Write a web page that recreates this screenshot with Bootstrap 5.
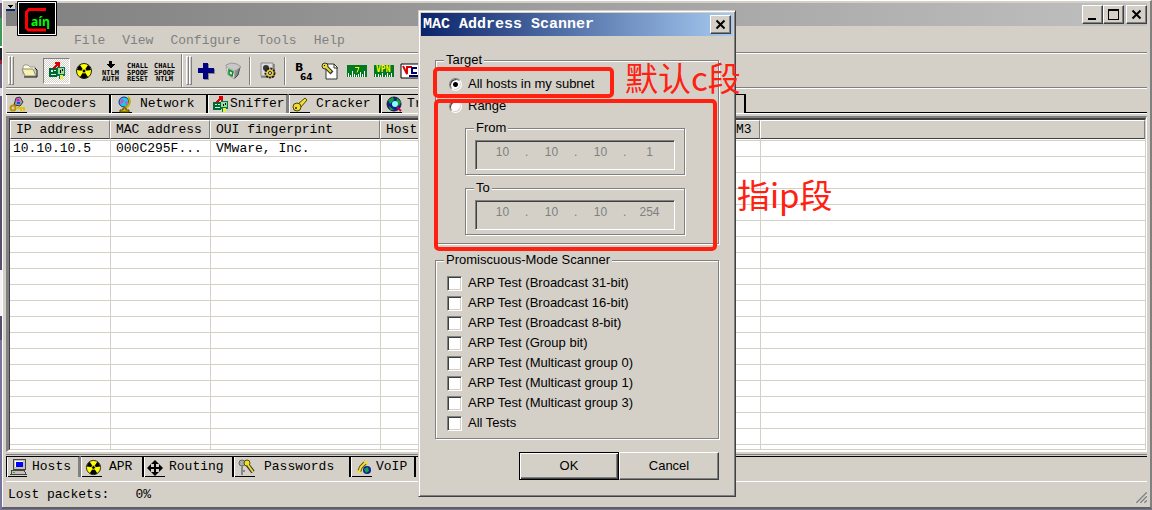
<!DOCTYPE html>
<html lang="en">
<head>
<meta charset="utf-8">
<meta name="viewport" content="width=device-width, initial-scale=1">
<title>Cain</title>
<link href="https://cdn.jsdelivr.net/npm/bootstrap@5.3.0/dist/css/bootstrap.min.css" rel="stylesheet">
<script src="https://cdn.jsdelivr.net/npm/bootstrap@5.3.0/dist/js/bootstrap.bundle.min.js"></script>
<style>
:root{--face:#d4d0c8;--shade:#808080;--deep:#404040;--ink:#ff2010}
body{background:linear-gradient(#d8d4e0 0 3px,#5d5570 3px 18px,#3f9a58 18px 46px,#fff 46px 48px,#20202c 48px 60px,#a02030 60px 64px,#6c6686 64px 88px,#dcd8e4 88px 96px,#5f5a7c 96px 160px,#55506e 160px 270px,#f4f2f4 270px 316px,#50506c 316px 340px,#76749c 340px);
 font-family:"Liberation Mono","Noto Sans CJK SC",monospace;font-size:13px;line-height:16px;color:#000;padding:0 0 1px 2px;overflow:hidden}
svg{display:block;flex:none}
.pix{shape-rendering:crispEdges}
.app-window{background:var(--face);min-height:calc(100vh - 1px);padding:2px 3px 0 4px;border-right:2px solid var(--shade);border-bottom:2px solid #606060;border-top:1px solid #fff;box-shadow:inset 1px 0 0 #fff}
.caption{height:23px;background:linear-gradient(90deg,#808080,#c0c0c0)}
.caption-buttons{padding-top:2px}
.sysbox{width:9px;height:8px;background:var(--face);border-bottom:2px solid #0a246a}
.cain-logo{left:15px;top:0}
.bevel{background:var(--face);border:1px solid;border-color:#fff var(--deep) var(--deep) #fff;box-shadow:inset -1px -1px 0 var(--shade);border-radius:0;padding:0;width:21px;height:19px;display:flex;align-items:center;justify-content:center}
.bevel+.bevel:last-child{margin-left:2px}
.menu-row{height:26px;padding:3px 0 0 68px;gap:17px}
.menu-row a{color:var(--shade);text-decoration:none}
.etched{border-top:1px solid var(--shade);box-shadow:inset 0 1px 0 #fff}
.tools{height:35px;padding:1px 0 0 2px}
.tool{width:27px;height:26px;padding:0;border:0;background:none;display:flex;align-items:center;justify-content:center;flex:none}
.tool.down{border:1px solid;border-color:var(--shade) #fff #fff var(--shade);background:repeating-conic-gradient(#fff 0 25%,var(--face) 0 50%) 0 0/2px 2px}
.grip{width:3px;height:29px;border:1px solid;border-color:#fff var(--shade) var(--shade) #fff;flex:none}
.grip-end{margin-right:2px}
.vline{width:2px;height:28px;background:linear-gradient(90deg,var(--shade) 50%,#fff 50%);margin:0 3px;flex:none}
.tabs-top{height:26px;padding-top:6px}
.tabs-top .strip{height:20px;background:#fff}
.strip-rest{background:linear-gradient(var(--face) 18px,#000 18px 19px,#fff 19px)}
.strip-tab{height:19px;border:0;border-top:1px solid #000;border-right:2px solid #000;border-radius:0;padding:0;background:linear-gradient(#000,#000) 1px 100%/20px 1px no-repeat,var(--face);color:#000;display:flex;align-items:center;flex:none;font-size:13px;line-height:16px;text-align:left;box-shadow:inset 1px 0 0 #fff;white-space:nowrap}
.strip-tab.on{border-right:3px solid var(--shade);background:var(--face)}
.strip-tab span{padding-bottom:1px}
.w-dec{width:105px;gap:8px;padding-left:3px}.w-net{width:97px;gap:7px;padding-left:5px}.w-sni{width:81px;gap:1px;padding-left:4px}
.w-cra{width:92px;gap:8px;padding-left:2px}.w-tra{width:200px;gap:4px;padding-left:5px}.w-que{width:165px}
.list-pane{margin-top:3px;border-top:2px solid var(--shade);border-left:3px solid var(--shade);border-right:1px solid #fff;border-bottom:2px solid #fff;min-height:200px;flex:1 0 auto}
.list-view{border-top:2px solid var(--deep);border-left:1px solid var(--deep);border-bottom:1px solid var(--face);border-right:1px solid var(--face);
 background:linear-gradient(var(--face),var(--face)) 100px 0/1px 100% no-repeat,linear-gradient(var(--face),var(--face)) 200px 0/1px 100% no-repeat,linear-gradient(var(--face),var(--face)) 370px 0/1px 100% no-repeat,linear-gradient(var(--face),var(--face)) 750px 0/1px 100% no-repeat,repeating-linear-gradient(#fff 0 4px,var(--face) 4px 5px,#fff 5px 16px),#fff}
.hosts-grid{width:100%;table-layout:fixed;border-collapse:separate;border-spacing:0}
.hosts-grid th{height:19px;padding:1px 0 0 5px;font-weight:400;background:var(--face);border-top:1px solid #fff;border-left:1px solid #fff;border-right:1px solid var(--shade);border-bottom:1px solid var(--deep);white-space:nowrap;overflow:hidden}
.hosts-grid td{padding:2px 0 0 6px;height:18px;white-space:nowrap;overflow:hidden}
.hosts-grid td:first-child{padding-left:3px}
.tabs-bottom{height:28px;margin-top:2px;border-top:1px solid var(--shade);background:linear-gradient(#000,#000) 0 1px/100% 1px no-repeat;border-bottom:1px solid #fff;padding-top:1px}
.tabs-bottom .strip-tab{height:21px;border-top:1px solid #000}
.tabs-bottom .on{border-left:1px solid #000;border-right:3px solid var(--shade);background:linear-gradient(#000,#000) 0 100%/20px 1px no-repeat,var(--face)}
.b-hosts{width:75px;gap:5px;padding-left:3px}.b-apr{width:63px;gap:7px;padding-left:4px}.b-rou{width:90px;gap:5px;padding-left:3px}.b-pas{width:117px;gap:9px;padding-left:4px}.b-voip{width:65px;gap:3px;padding-left:5px}
.status{height:25px;padding-left:2px;gap:26px}
.dialog-layer{padding:10px 0 0 2px}
.scan-dialog{width:318px;background:var(--face);border:1px solid;border-color:var(--face) var(--deep) var(--deep) var(--face);box-shadow:inset 1px 1px 0 #fff,inset -1px -1px 0 var(--shade);padding:2px;font-family:"Liberation Sans",Arial,sans-serif}
.scan-title{height:23px;background:linear-gradient(90deg,#0a246a,#a6caf0);color:#fff;font:bold 15px/23px "Liberation Mono",monospace;padding:0 2px}
.scan-body{padding:16px 14px 14px 14px}
.group{--side:9px;border:1px solid var(--shade);box-shadow:1px 1px 0 #fff,inset 1px 1px 0 #fff;margin:0}
.group>legend{float:none;width:auto;margin:0 0 0 calc(8px - var(--side));padding:0 2px;font-size:13px;line-height:16px;background:var(--face)}
.g-target{--side:29px;padding:8px 33px 8px 29px}
.g-ip{padding:4px 9px}
.g-ip+.g-ip{margin-top:5px}
.g-modes{--side:11px;padding:5px 11px}
.pick{gap:6px;height:16px}
.pick-range{margin:6px 0}
.g-modes .pick{height:20px}
.form-check-input.w95{margin:0;width:15px;height:15px;border-radius:0;border:1px solid;border-color:var(--shade) #fff #fff var(--shade);box-shadow:inset 1px 1px 0 var(--deep),inset -1px -1px 0 var(--face);background-color:#fff;flex:none}
.form-check-input.w95[type=radio]{width:13px;height:13px;border-radius:50%;background-image:none}
.form-check-input.w95[type=radio]:checked{background:radial-gradient(circle,#000 0 2px,#fff 3px)}
.g-target>.pick{margin-left:-16px}
.ip-box{height:30px;border:1px solid;border-color:var(--shade) #fff #fff var(--shade);box-shadow:inset 1px 1px 0 var(--deep);padding:3px 0 0 4px;color:var(--shade)}
.ip-box input{width:45px;height:16px;border:0;padding:0;background:none;text-align:center;font-size:12px;line-height:16px;color:var(--shade)}
.ip-box span{width:4px;font-size:12px}
.actions{margin-top:13px}
.push{width:100px;height:28px;padding:0;border:1px solid;border-color:#fff var(--deep) var(--deep) #fff;box-shadow:inset -1px -1px 0 var(--shade);background:var(--face);border-radius:0;font-size:13px;line-height:16px;color:#000}
.push.main{border-color:#000;box-shadow:inset 1px 1px 0 #fff,inset -1px -1px 0 var(--deep),inset -2px -2px 0 var(--shade)}
.ring{border:4px solid var(--ink);border-radius:5px}
.ring-one{left:14px;top:56px;width:181px;height:31px}
.ring-two{left:15px;top:88px;width:283px;height:152px}
.remark{color:var(--ink);font:33px/40px "Noto Sans CJK SC",sans-serif;white-space:nowrap}
.remark-one{left:206px;top:46px}
.remark-two{left:318px;top:163px}
</style>
</head>
<body>
<main class="app-window d-flex flex-column position-relative">
 <header class="caption d-flex justify-content-between">
  <div class="sysbox"><svg class="pix" width="9" height="6"><path d="M2 2h5v1H2zM3 3h3v1H3zM4 4h1v1H4z"/></svg></div>
  <div class="caption-buttons d-flex">
   <button class="bevel" aria-label="Minimize"><svg class="pix" width="13" height="13"><path d="M2 10h8v2H2z"/></svg></button>
   <button class="bevel" aria-label="Maximize"><svg class="pix" width="13" height="13"><path fill-rule="evenodd" d="M1 1h11v11H1zM2 3v8h9V3z"/></svg></button>
   <button class="bevel" aria-label="Close window"><svg width="13" height="13"><path d="M2.500 2.500l8 8M10.500 2.500l-8 8" stroke="#000" stroke-width="2"/></svg></button>
  </div>
 </header>
 <svg class="cain-logo position-absolute" width="40" height="35" viewBox="0 0 40 35"><rect width="40" height="35" rx="1"/><rect x="1.500" y="1.500" width="37" height="32" fill="none" stroke="#fff"/><path d="M29 8.500H12l-2.500 2.500v16l2 2H29" fill="none" stroke="#f00" stroke-width="3"/><text x="14" y="25" fill="#0f0" font-family="Open Sans,sans-serif" font-size="12" font-weight="bold">aíη</text></svg>
 <nav class="menu-row d-flex align-items-center"><a href="#">File</a><a href="#">View</a><a href="#">Configure</a><a href="#">Tools</a><a href="#">Help</a></nav>
 <div class="tools etched d-flex align-items-center">
  <div class="grip"></div><div class="grip grip-end"></div>
  <button class="tool" aria-label="Open"><svg width="18" height="16" viewBox="0 0 18 16"><path d="M2 12V4l1-2h4l2 2h5v4" fill="#ffffd8" stroke="#999"/><path d="M1 6h11l3 7H4z" fill="#f6f2a8" stroke="#888"/><path d="M3 14h13V7l-2-2" fill="none" stroke="#111"/></svg></button>
  <button class="tool down" aria-label="Start sniffer"><svg class="pix" width="18" height="18"><use href="#i-nic"/></svg></button>
  <button class="tool" aria-label="Start APR"><svg width="18" height="18"><use href="#i-rad"/></svg></button>
  <button class="tool" aria-label="NTLM auth"><svg width="23" height="24" font-family="DejaVu Sans Mono,monospace" font-size="7" font-weight="bold"><path class="pix" d="M10 2h3v3h3l-4 4h-1l-4-4h3z"/><text x="3" y="16">NTLM</text><text x="3" y="22">AUTH</text></svg></button>
  <button class="tool" aria-label="Challenge spoof reset"><svg width="23" height="24" font-family="DejaVu Sans Mono,monospace" font-size="7" font-weight="bold"><text x="1" y="9">CHALL</text><text x="1" y="16">SPOOF</text><text x="1" y="22">RESET</text></svg></button>
  <button class="tool" aria-label="Challenge spoof NTLM"><svg width="23" height="24" font-family="DejaVu Sans Mono,monospace" font-size="7" font-weight="bold"><text x="1" y="9">CHALL</text><text x="1" y="16">SPOOF</text><text x="3" y="22">NTLM</text></svg></button>
  <div class="vline h-100"></div><div class="grip"></div><div class="grip"></div>
  <button class="tool" aria-label="Add"><svg class="pix" width="18" height="18"><path d="M7 2h5v5h6v5h-6v6H7z" fill="#888"/><path d="M6 1h5v5h6v5h-6v6H6v-6H1V6h5z" fill="#000080"/></svg></button>
  <button class="tool" aria-label="Remove"><svg width="18" height="18"><path d="M10 8l6-3-2 8-4 4z" fill="#888" stroke="#444"/><path d="M2 3l5-2 6 1 4 3-6 4-8-2z" fill="#c8c8c8" stroke="#999"/><path d="M2 5l9 4-1 8-6-4z" fill="#e4e4e4" stroke="#aaa"/><path d="M5 8l4 2-1 4-3-2z" fill="none" stroke="#0a8a2a" stroke-width="1.500"/></svg></button>
  <div class="vline"></div>
  <button class="tool" aria-label="Configure"><svg width="18" height="18"><path d="M2 1h12v13H2z" fill="#dcdcdc" stroke="#888"/><path d="M2 15h13V2" fill="none" stroke="#555"/><circle cx="7" cy="6" r="3" fill="#333"/><circle cx="11" cy="11" r="4.500" fill="none" stroke="#221a00" stroke-width="2" stroke-dasharray="2 1"/><circle cx="11" cy="11" r="3.500" fill="#e8cc30"/><circle cx="11" cy="11" r="1.500" fill="#fff" stroke="#222"/></svg></button>
  <div class="vline"></div>
  <button class="tool" aria-label="Base64"><svg width="20" height="20" font-family="DejaVu Sans,sans-serif" font-weight="bold"><text x="2" y="10" font-size="11">B</text><text x="7" y="19" font-size="9">64</text></svg></button>
  <button class="tool" aria-label="Access decoder"><svg width="18" height="18"><path d="M5 2h8l3 3v12H5z" fill="#fff" stroke="#333"/><path d="M13 2v4h4" fill="none" stroke="#333"/><path d="M5 5l6 6" stroke="#333" stroke-width="4"/><circle cx="4" cy="4" r="3" fill="#e8d838" stroke="#333"/><path d="M5 5l5 5" stroke="#e8d838" stroke-width="2"/><path d="M3 3h1v1H3z"/></svg></button>
  <button class="tool" aria-label="Cisco type 7"><svg width="20" height="14"><path class="pix" d="M0 1h20v12H0z" fill="#007a20"/><path class="pix" d="M1.500 9v4M3.500 11v2M5.500 7v6M7.500 10v3M9.500 11v2M11.500 10v3M13.500 8v5M15.500 10v3M17.500 7v6" stroke="#fff"/><path d="M8 3.500h4l-2 5" fill="none" stroke="#ff0"/></svg></button>
  <button class="tool" aria-label="VPN decoder"><svg width="20" height="14"><path class="pix" d="M0 1h20v12H0z" fill="#007a20"/><path class="pix" d="M1.500 10v3M4.500 10v3M6.500 11v2M8.500 9v4M11.500 11v2M13.500 9v4M15.500 11v2M17.500 9v4" stroke="#fff"/><text x="2" y="8" font-family="DejaVu Sans Mono,monospace" font-size="8" font-weight="bold" fill="#ff0">VPN</text></svg></button>
  <button class="tool" aria-label="VNC decoder"><svg width="22" height="16"><path d="M1 1h20v14H1z" fill="#fff" stroke="#000"/><path d="M3 3l4 8V4h5" fill="none" stroke="#d00" stroke-width="2"/><path d="M17 5h-5v5h5M9 13h11" fill="none" stroke="#006" stroke-width="2"/></svg></button>
 </div>
 <div class="tabs-top etched">
  <div class="strip d-flex">
   <button class="strip-tab w-dec"><svg width="17" height="17"><path d="M7 2l4-1 3 5-3 4-6-1z" fill="#999" stroke="#333"/><circle cx="9" cy="4" r="1.500" fill="#f0f"/><path d="M8 7h3" stroke="#05e" stroke-width="2"/><circle cx="4" cy="12" r="2.500" fill="none" stroke="#ba9500" stroke-width="2"/><path d="M7 12h9M12 12v3M15 12v3" stroke="#e4c600" stroke-width="2"/></svg><span>Decoders</span></button>
   <button class="strip-tab w-net"><svg width="17" height="17"><use href="#i-globe"/></svg><span>Network</span></button>
   <button class="strip-tab on w-sni"><svg class="pix" width="17" height="17"><use href="#i-nic"/></svg><span>Sniffer</span></button>
   <button class="strip-tab w-cra"><svg width="17" height="17"><path d="M7 8l7-6 2 2-6 7" fill="#f0df35" stroke="#514500"/><circle cx="6" cy="11" r="4" fill="#eedc30" stroke="#514500"/><circle cx="5" cy="12" r="1" fill="#222"/></svg><span>Cracker</span></button>
   <button class="strip-tab w-tra"><svg width="17" height="17"><circle cx="8" cy="8" r="7" fill="#102090" stroke="#123"/><path d="M2 4l5-3 1 3-4 4zM11 2l4 4-2 4-3-3zM3 10l5 4-4 0z" fill="#159d36"/><circle cx="9" cy="8" r="3" fill="#8ff"/><path d="M11 11l4 4" stroke="#d00040" stroke-width="2"/></svg><span>Tr</span></button>
   <div class="strip-tab w-que" aria-hidden="true"></div>
   <div class="strip-rest flex-grow-1"></div>
  </div>
 </div>
 <section class="list-pane d-flex">
  <div class="list-view flex-grow-1">
   <table class="hosts-grid">
    <colgroup><col style="width:100px"><col style="width:100px"><col style="width:170px"><col style="width:350px"><col style="width:30px"><col></colgroup>
    <thead><tr><th>IP address</th><th>MAC address</th><th>OUI fingerprint</th><th>Host</th><th>M3</th><th></th></tr></thead>
    <tbody><tr><td>10.10.10.5</td><td>000C295F...</td><td>VMware, Inc.</td><td></td><td></td><td></td></tr></tbody>
   </table>
  </div>
 </section>
 <div class="tabs-bottom d-flex">
  <button class="strip-tab on b-hosts"><svg class="pix" width="17" height="17"><path d="M3 0h12v10H3z" fill="#c4c0b8" stroke="#444"/><path d="M5 2h8v6H5z" fill="#fff"/><path d="M6 3h7v5H6z" fill="#00f"/><path d="M2 11h12l2 4H1z" fill="#c4c0b8" stroke="#444"/><path d="M3 13h2v1H3z" fill="#0c0"/></svg><span>Hosts</span></button>
  <button class="strip-tab b-apr"><svg width="17" height="17"><use href="#i-rad"/></svg><span>APR</span></button>
  <button class="strip-tab b-rou"><svg width="17" height="17"><path d="M8 1l4 4H9v3h3V5l4 4-4 4v-3H9v3h3l-4 4-4-4h3v-3H4v3L0 9l4-4v3h3V5H4z"/></svg><span>Routing</span></button>
  <button class="strip-tab b-pas"><svg width="17" height="17"><circle cx="4" cy="4" r="3" fill="#aaa" stroke="#666"/><path d="M4 7v9M5 12h2" stroke="#888" stroke-width="2"/><path d="M9 5l6 8" stroke="#333" stroke-width="4"/><circle cx="9" cy="4" r="3" fill="#eedc30" stroke="#554800"/><path d="M10 6l5 7" stroke="#eedc30" stroke-width="2"/></svg><span>Passwords</span></button>
  <button class="strip-tab b-voip"><svg width="17" height="17"><path d="M3 13l2-5 5-5" fill="none" stroke="#665800" stroke-width="4"/><path d="M3 13l2-5 5-5M1 12l4 2M8 2l4 3" fill="none" stroke="#eee044" stroke-width="2"/><circle cx="11" cy="11" r="4" fill="#102090"/><path d="M8 10l4-2 1 4-3 2z" fill="#10a74a"/></svg><span>VoIP</span></button>
 </div>
 <footer class="status d-flex align-items-center"><span>Lost packets:</span><span>0%</span><svg class="ms-auto align-self-end mb-1" width="12" height="12"><path d="M0 12L12 0M4 12l8-8M8 12l4-4" stroke="#fff"/><path d="M1 12L12 1M5 12l7-7M9 12l3-3" stroke="#808080" stroke-width="1.500"/></svg></footer>
</main>

<div class="dialog-layer position-absolute top-0 start-0 end-0 d-flex justify-content-center">
 <section class="scan-dialog position-relative" role="dialog" aria-labelledby="scan-name">
  <div class="scan-title d-flex justify-content-between align-items-center"><span id="scan-name">MAC Address Scanner</span><button class="bevel" aria-label="Close"><svg width="13" height="13"><path d="M2.500 2.500l8 8M10.500 2.500l-8 8" stroke="#000" stroke-width="2"/></svg></button></div>
  <form class="scan-body">
   <fieldset class="group g-target"><legend>Target</legend>
    <div class="pick d-flex align-items-center"><input class="form-check-input w95" type="radio" name="target" id="t-all" checked><label for="t-all">All hosts in my subnet</label></div>
    <div class="pick pick-range d-flex align-items-center"><input class="form-check-input w95" type="radio" name="target" id="t-range"><label for="t-range">Range</label></div>
    <fieldset class="group g-ip" disabled><legend>From</legend><div class="ip-box d-flex"><input aria-label="From 1" value="10"><span>.</span><input aria-label="From 2" value="10"><span>.</span><input aria-label="From 3" value="10"><span>.</span><input aria-label="From 4" value="1"></div></fieldset>
    <fieldset class="group g-ip" disabled><legend>To</legend><div class="ip-box d-flex"><input aria-label="To 1" value="10"><span>.</span><input aria-label="To 2" value="10"><span>.</span><input aria-label="To 3" value="10"><span>.</span><input aria-label="To 4" value="254"></div></fieldset>
   </fieldset>
   <fieldset class="group g-modes mt-2"><legend>Promiscuous-Mode Scanner</legend>
    <div class="pick d-flex align-items-center"><input class="form-check-input w95" type="checkbox" id="c1"><label for="c1">ARP Test (Broadcast 31-bit)</label></div>
    <div class="pick d-flex align-items-center"><input class="form-check-input w95" type="checkbox" id="c2"><label for="c2">ARP Test (Broadcast 16-bit)</label></div>
    <div class="pick d-flex align-items-center"><input class="form-check-input w95" type="checkbox" id="c3"><label for="c3">ARP Test (Broadcast 8-bit)</label></div>
    <div class="pick d-flex align-items-center"><input class="form-check-input w95" type="checkbox" id="c4"><label for="c4">ARP Test (Group bit)</label></div>
    <div class="pick d-flex align-items-center"><input class="form-check-input w95" type="checkbox" id="c5"><label for="c5">ARP Test (Multicast group 0)</label></div>
    <div class="pick d-flex align-items-center"><input class="form-check-input w95" type="checkbox" id="c6"><label for="c6">ARP Test (Multicast group 1)</label></div>
    <div class="pick d-flex align-items-center"><input class="form-check-input w95" type="checkbox" id="c7"><label for="c7">ARP Test (Multicast group 3)</label></div>
    <div class="pick d-flex align-items-center"><input class="form-check-input w95" type="checkbox" id="c8"><label for="c8">All Tests</label></div>
   </fieldset>
   <div class="actions d-flex justify-content-end"><button type="button" class="btn push main">OK</button><button type="button" class="btn push">Cancel</button></div>
  </form>
  <div class="ring ring-one position-absolute pe-none"></div>
  <div class="ring ring-two position-absolute pe-none"></div>
  <div class="remark remark-one position-absolute" lang="zh-CN">默认c段</div>
  <div class="remark remark-two position-absolute" lang="zh-CN">指ip段</div>
 </section>
</div>

<svg class="position-absolute" width="0" height="0" aria-hidden="true">
 <symbol id="i-rad" viewBox="0 0 18 18"><circle cx="9" cy="9" r="7.500" fill="#ff0" stroke="#222"/><path d="M9 9L2 8a7 7 0 0 1 3-5zM9 9l4-6a7 7 0 0 1 3 5zM9 9l4 6a7 7 0 0 1-8 0z"/><circle cx="9" cy="9" r="2" stroke="#ff0"/></symbol>
 <symbol id="i-nic" viewBox="0 0 18 18"><path d="M1 6h8v9H1z" fill="#063"/><path d="M3 8h2v2H3zM6 8h2v1H6zM3 12h5v1H3z" fill="#bfd"/><path d="M9 5h8v9h-2v3h-4v-3H9z" fill="#075"/><path d="M10 6h6v6h-6z" fill="#9d9"/><path d="M12 8h1v3h-1zM14 7h1v2h-1z"/><path d="M12 13h3v4h-3z" fill="#ee3"/><path d="M5 7l5-5M7 1h4v4" fill="none" stroke="#d00" stroke-width="2"/></symbol>
 <symbol id="i-globe" viewBox="0 0 17 17"><circle cx="8" cy="6" r="5" fill="#1ac8e8" stroke="#1a2690"/><path d="M5 3l3 1-1 3-3 1zM9 5l3 1-2 4z" fill="#d050c0"/><path d="M12 1c4 4 1 11-5 11" fill="none" stroke="#c9ac00" stroke-width="2"/><path d="M7 12h3v2h3v2H4v-2h3z" fill="#d2b500" stroke="#554500"/></symbol>
</svg>
</body>
</html>
